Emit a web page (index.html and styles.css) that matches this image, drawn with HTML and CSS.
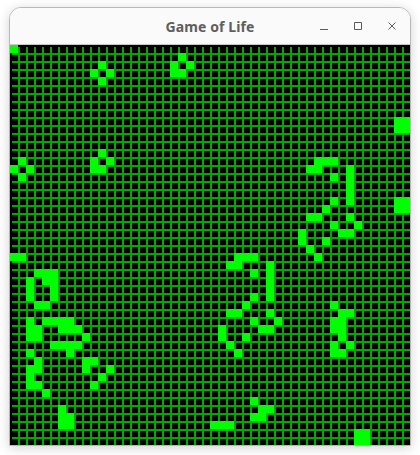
FILE: index.html
```html
<!DOCTYPE html>
<html lang="en">
<head>
<meta charset="utf-8">
<title>Game of Life</title>
<link rel="stylesheet" href="styles.css">
</head>
<body>
<main class="window">
  <header class="titlebar">
    <span></span>
    <h1 class="title">Game of Life</h1>
    <div class="controls">
      <button class="control" aria-label="Minimize"><svg class="icon" viewBox="0 0 10 10"><path d="M1 8.5h8"/></svg></button>
      <button class="control" aria-label="Maximize"><svg class="icon" viewBox="0 0 10 10"><path d="M1.5 1.5h7v7h-7z"/></svg></button>
      <button class="control" aria-label="Close"><svg class="icon" viewBox="0 0 10 10"><path d="M1.5 1.5l7 7M8.5 1.5l-7 7"/></svg></button>
    </div>
  </header>
  <div class="board">
    <svg class="cells" viewBox="0 0 50 50" width="400" height="400">
      <rect x="0" y="0" width="1" height="1"/>
      <rect x="21" y="1" width="1" height="1"/>
      <rect x="11" y="2" width="1" height="1"/><rect x="20" y="2" width="1" height="1"/><rect x="22" y="2" width="1" height="1"/>
      <rect x="10" y="3" width="1" height="1"/><rect x="12" y="3" width="1" height="1"/><rect x="20" y="3" width="2" height="1"/>
      <rect x="11" y="4" width="1" height="1"/>
      <rect x="48" y="9" width="2" height="2"/>
      <rect x="11" y="13" width="1" height="1"/>
      <rect x="1" y="14" width="1" height="1"/><rect x="10" y="14" width="1" height="1"/><rect x="12" y="14" width="1" height="1"/><rect x="38" y="14" width="3" height="1"/>
      <rect x="0" y="15" width="1" height="1"/><rect x="2" y="15" width="1" height="1"/><rect x="10" y="15" width="2" height="1"/><rect x="37" y="15" width="2" height="1"/><rect x="42" y="15" width="1" height="5"/>
      <rect x="1" y="16" width="1" height="1"/><rect x="40" y="16" width="1" height="1"/>
      <rect x="40" y="19" width="1" height="1"/><rect x="48" y="19" width="2" height="2"/>
      <rect x="39" y="20" width="1" height="1"/>
      <rect x="37" y="21" width="2" height="1"/><rect x="42" y="21" width="1" height="1"/>
      <rect x="40" y="22" width="1" height="1"/><rect x="43" y="22" width="1" height="1"/>
      <rect x="36" y="23" width="1" height="2"/><rect x="41" y="23" width="2" height="1"/>
      <rect x="39" y="24" width="1" height="1"/>
      <rect x="37" y="25" width="1" height="1"/>
      <rect x="0" y="26" width="2" height="1"/><rect x="28" y="26" width="3" height="1"/><rect x="38" y="26" width="1" height="1"/>
      <rect x="27" y="27" width="2" height="1"/><rect x="32" y="27" width="1" height="5"/>
      <rect x="3" y="28" width="3" height="1"/><rect x="30" y="28" width="1" height="1"/>
      <rect x="2" y="29" width="1" height="3"/><rect x="4" y="29" width="2" height="1"/>
      <rect x="5" y="30" width="1" height="2"/>
      <rect x="30" y="31" width="1" height="1"/>
      <rect x="3" y="32" width="2" height="1"/><rect x="29" y="32" width="1" height="1"/><rect x="40" y="32" width="1" height="1"/>
      <rect x="27" y="33" width="2" height="1"/><rect x="32" y="33" width="1" height="1"/><rect x="41" y="33" width="2" height="1"/>
      <rect x="2" y="34" width="1" height="1"/><rect x="4" y="34" width="4" height="1"/><rect x="30" y="34" width="1" height="1"/><rect x="33" y="34" width="1" height="1"/><rect x="40" y="34" width="2" height="2"/>
      <rect x="2" y="35" width="2" height="2"/><rect x="6" y="35" width="3" height="1"/><rect x="26" y="35" width="1" height="2"/><rect x="31" y="35" width="2" height="1"/>
      <rect x="9" y="36" width="1" height="1"/><rect x="29" y="36" width="1" height="1"/><rect x="41" y="36" width="1" height="1"/>
      <rect x="5" y="37" width="4" height="1"/><rect x="27" y="37" width="1" height="1"/><rect x="40" y="37" width="1" height="1"/><rect x="42" y="37" width="1" height="1"/>
      <rect x="2" y="38" width="1" height="1"/><rect x="7" y="38" width="1" height="1"/><rect x="28" y="38" width="1" height="1"/><rect x="40" y="38" width="2" height="1"/>
      <rect x="3" y="39" width="1" height="1"/><rect x="9" y="39" width="2" height="1"/>
      <rect x="2" y="40" width="2" height="1"/><rect x="9" y="40" width="1" height="1"/><rect x="12" y="40" width="1" height="1"/>
      <rect x="2" y="41" width="1" height="1"/><rect x="11" y="41" width="1" height="1"/>
      <rect x="2" y="42" width="2" height="1"/><rect x="10" y="42" width="1" height="1"/>
      <rect x="4" y="43" width="1" height="1"/>
      <rect x="30" y="44" width="1" height="1"/>
      <rect x="6" y="45" width="1" height="1"/><rect x="31" y="45" width="2" height="1"/>
      <rect x="6" y="46" width="2" height="2"/><rect x="30" y="46" width="2" height="1"/>
      <rect x="25" y="47" width="3" height="1"/>
      <rect x="43" y="48" width="2" height="2"/>
    </svg>
  </div>
</main>
</body>
</html>
```
FILE: styles.css
```css
html, body {
  margin: 0;
  height: 100%;
  background: #fff;
  overflow: hidden;
}

body {
  display: flex;
  align-items: flex-start;
  justify-content: center;
  padding-top: 7px;
  box-sizing: border-box;
}

.window {
  width: 400px;
  border: 1px solid #b8b8b8;
  border-radius: 12px 12px 0 0;
  box-shadow: 0 2px 12px rgba(0, 0, 0, 0.18);
  background: #fafafa;
  overflow: hidden;
}

.titlebar {
  height: 36px;
  display: grid;
  grid-template-columns: 1fr auto 1fr;
  align-items: center;
  background: #fafafa;
  border-bottom: 1px solid #c9c9c9;
}

.title {
  margin: 2px 0 0;
  font: 700 14px/1 "Noto Sans", sans-serif;
  letter-spacing: 0.1px;
  color: #5e5e5e;
}

.controls {
  display: flex;
  justify-content: flex-end;
  padding-right: 1px;
}

.control {
  width: 34px;
  height: 36px;
  padding: 0;
  border: 0;
  background: none;
  display: flex;
  align-items: center;
  justify-content: center;
}

.icon {
  width: 10px;
  height: 10px;
  fill: none;
  stroke: #5c5c5c;
  stroke-width: 1;
}

.board {
  width: 400px;
  height: 400px;
  background-color: #000;
  background-image:
    linear-gradient(#000, #000),
    linear-gradient(#000, #000),
    linear-gradient(#00a800 2px, transparent 2px),
    linear-gradient(90deg, #00a800 2px, transparent 2px);
  background-size: 100% 2px, 2px 100%, 8px 8px, 8px 8px;
  background-repeat: no-repeat, no-repeat, repeat, repeat;
}

.cells {
  display: block;
  fill: #00ff00;
  shape-rendering: crispEdges;
}
```
